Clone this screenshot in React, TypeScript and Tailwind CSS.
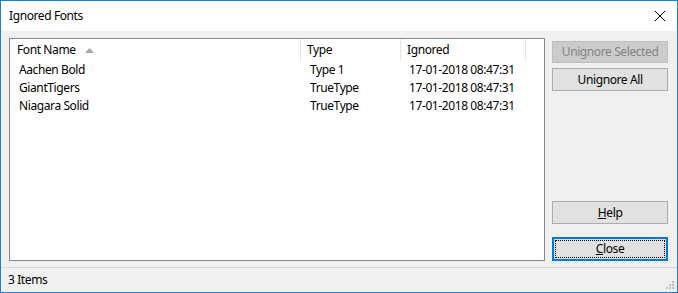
import React from "react";

const rows = [
  { name: "Aachen Bold", type: "Type 1", ignored: "17-01-2018 08:47:31" },
  { name: "GiantTigers", type: "TrueType", ignored: "17-01-2018 08:47:31" },
  { name: "Niagara Solid", type: "TrueType", ignored: "17-01-2018 08:47:31" },
];

export default function App() {
  return (
    <div
      className="w-[678px] h-[293px] border border-[#1883d7] flex flex-col bg-[#f0f0f0] text-[12px] tracking-[-0.4px] text-black overflow-hidden"
      style={{ fontFamily: '"Noto Sans", "Open Sans", sans-serif' }}
    >
      {/* Title bar */}
      <div className="h-[30px] bg-white flex items-center justify-between pl-[8px] pr-[10px]">
        <span className="leading-none">Ignored Fonts</span>
        <svg width="12" height="12" viewBox="0 0 12 12" className="mr-[1px]">
          <path d="M1 1 L11 11 M11 1 L1 11" stroke="#000" strokeWidth="1" fill="none" />
        </svg>
      </div>

      {/* Body */}
      <div className="flex-1 flex pl-[8px] pr-[9px] pt-[7px] pb-[6px] gap-[7px]">
        {/* List */}
        <div className="w-[537px] h-[223px] border border-[#828790] bg-white flex flex-col">
          <div className="flex h-[22px] items-center">
            <div className="w-[291px] h-full flex items-center pl-[7px] border-r border-[#e5e5e5] gap-[9px]">
              <span>Font Name</span>
              <svg width="9" height="5" viewBox="0 0 9 5">
                <path d="M0 5 L4.5 0 L9 5 Z" fill="#a6a6a6" />
              </svg>
            </div>
            <div className="w-[100px] h-full flex items-center pl-[6px] border-r border-[#e5e5e5]">Type</div>
            <div className="w-[125px] h-full flex items-center pl-[6px] border-r border-[#e5e5e5]">Ignored</div>
          </div>
          {rows.map((r) => (
            <div key={r.name} className="flex h-[18px] items-center">
              <div className="w-[292px] pl-[9px]">{r.name}</div>
              <div className="w-[100px] pl-[8px]">{r.type}</div>
              <div className="w-[125px] pl-[7px]">{r.ignored}</div>
            </div>
          ))}
        </div>

        {/* Buttons */}
        <div className="w-[116px] flex flex-col pt-[3px]">
          <div className="h-[22px] border border-[#bfbfbf] bg-[#cccccc] text-[#838383] flex items-center justify-center">
            Unignore Selected
          </div>
          <div className="h-[23px] mt-[5px] border border-[#adadad] bg-[#e1e1e1] flex items-center justify-center">
            Unignore All
          </div>
          <div className="flex-1" />
          <div className="h-[23px] border border-[#adadad] bg-[#e1e1e1] flex items-center justify-center">
            <span>
              <span className="underline">H</span>elp
            </span>
          </div>
          <div className="h-[24px] mt-[13px] border-2 border-[#0078d7] bg-[#e1e1e1] p-[1px]">
            <div className="h-full border border-dotted border-black flex items-center justify-center">
              <span>
                <span className="underline">C</span>lose
              </span>
            </div>
          </div>
        </div>
      </div>

      {/* Status bar */}
      <div className="h-[25px] border-t border-[#d7d7d7] flex items-center justify-between pl-[7px] pr-[2px] relative">
        <span>3 Items</span>
        <svg width="10" height="10" viewBox="0 0 10 10" className="absolute right-[2px] bottom-[2px]">
          <rect x="7" y="1" width="2" height="2" fill="#bfbfbf" />
          <rect x="4" y="4" width="2" height="2" fill="#bfbfbf" />
          <rect x="7" y="4" width="2" height="2" fill="#bfbfbf" />
          <rect x="1" y="7" width="2" height="2" fill="#bfbfbf" />
          <rect x="4" y="7" width="2" height="2" fill="#bfbfbf" />
          <rect x="7" y="7" width="2" height="2" fill="#bfbfbf" />
        </svg>
      </div>
    </div>
  );
}
